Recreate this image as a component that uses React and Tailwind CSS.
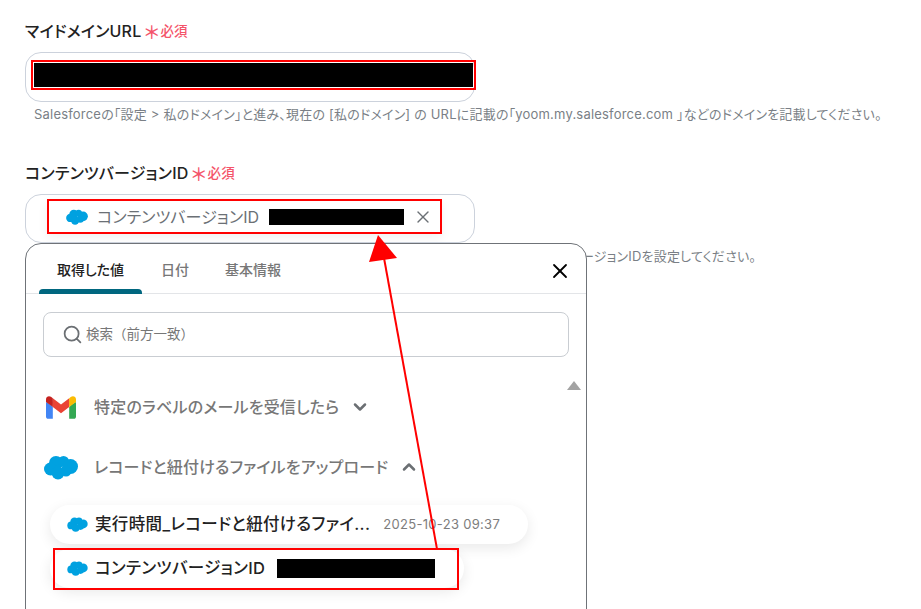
import { Search, X, ChevronDown, ChevronUp } from 'lucide-react';

const font = { fontFamily: 'Inter, "Noto Sans CJK JP", sans-serif' };

function Cloud({ className }) {
  return (
    <svg viewBox="0 0 34 25" className={className}>
      <g fill="#00a1e0">
        <circle cx="12" cy="8" r="7" />
        <circle cx="19.5" cy="6.5" r="5.5" />
        <circle cx="26.5" cy="11.5" r="7.5" />
        <circle cx="6.5" cy="14" r="6.5" />
        <circle cx="14" cy="18" r="6.5" />
        <circle cx="22" cy="16" r="5.5" />
      </g>
    </svg>
  );
}

function Gmail({ className }) {
  return (
    <svg viewBox="0 0 256 193" className={className}>
      <path fill="#4285F4" d="M58.182 192.05V93.14L27.507 65.077 0 49.504v125.091c0 9.658 7.825 17.455 17.455 17.455h40.727Z" />
      <path fill="#34A853" d="M197.818 192.05h40.727c9.659 0 17.455-7.826 17.455-17.455V49.505l-31.156 17.837-27.026 25.798v98.91Z" />
      <path fill="#EA4335" d="m58.182 93.14-4.174-38.647 4.174-36.989L128 69.868l69.818-52.364 4.669 34.992-4.669 40.644L128 145.504z" />
      <path fill="#FBBC04" d="M197.818 17.504V93.14L256 49.504V26.231c0-21.585-24.64-33.89-41.89-20.945l-16.292 12.218Z" />
      <path fill="#C5221F" d="M0 49.504l26.759 20.07L58.182 93.14V17.504L41.89 5.286C24.61-7.66 0 4.646 0 26.23v23.273Z" />
    </svg>
  );
}

function Label({ children }) {
  return (
    <div className="flex items-center h-[20px] text-[16px] tracking-[0.2px] font-medium text-[#222]">
      <span>{children}</span>
      <span className="ml-[3px] text-[18px] leading-none text-[#f4546a] translate-y-[2px]">＊</span>
      <span className="ml-[1px] text-[13.5px] font-medium text-[#f4546a]">必須</span>
    </div>
  );
}

export default function App() {
  return (
    <div style={font} className="relative w-[921px] h-[609px] overflow-hidden bg-white [font-feature-settings:'palt']">
      <div className="px-[25px] pt-[21px]">
        <Label>マイドメインURL</Label>
        <div className="mt-[11px] w-[450px] h-[50px] rounded-[16px] border border-[#ccd2dc] bg-white" />
        <p className="mt-[3px] ml-[9px] h-[18px] text-[13px] leading-[18px] tracking-[0.2px] text-[#7a7f86] whitespace-nowrap">
          Salesforceの「設定 &gt; 私のドメイン」と進み、現在の [私のドメイン] の URLに記載の「yoom.my.salesforce.com 」などのドメインを記載してください。
        </p>

        <div className="mt-[40px]">
          <Label>コンテンツバージョンID</Label>
        </div>
        <div className="mt-[11px] w-[450px] h-[49px] rounded-[16px] border border-[#ccd2dc] bg-white" />
        <p className="absolute left-[581px] top-[247px] text-[13px] leading-[18px] tracking-[0.2px] text-[#7a7f86] whitespace-nowrap">
          ージョンIDを設定してください。
        </p>
      </div>

      {/* red frame on the first field */}
      <div className="absolute left-[31px] top-[60px] w-[445px] h-[30px] border-2 border-[#f00] p-[1px]">
        <div className="w-full h-full bg-black" />
      </div>

      {/* selected value chip */}
      <div className="absolute left-[47px] top-[199px] w-[395px] h-[35px] border-2 border-[#f00] flex items-center pl-[17px] pt-[1px] text-[16px] tracking-[0.1px] text-[#6b7075] bg-white shadow-[0_4px_10px_rgba(0,0,0,0.06)]">
        <Cloud className="w-[22px] h-[16px]" />
        <span className="ml-[9px] whitespace-nowrap">コンテンツバージョンID</span>
        <span className="ml-[10px] w-[135px] h-[16px] bg-black" />
        <X className="ml-[9px] w-[20px] h-[20px] text-[#6b7075]" strokeWidth={1.6} />
      </div>

      {/* popup */}
      <div className="absolute left-[25px] top-[243px] w-[562px] h-[400px] rounded-[16px] border border-[#6f7378] bg-white">
        <div className="relative flex h-[50px] border-b border-[#e3e5e8] text-[14px] font-medium">
          <div className="ml-[13px] w-[103px] flex items-center justify-center pt-[1px] text-[#222] relative">
            取得した値
            <span className="absolute left-0 right-0 bottom-[-1px] h-[5px] rounded-t-[4px] bg-[#00677f]" />
          </div>
          <div className="ml-[19px] flex items-center pt-[1px] text-[#777]">日付</div>
          <div className="ml-[36px] flex items-center pt-[1px] text-[#777]">基本情報</div>
          <X className="absolute right-[14px] top-[15px] w-[24px] h-[24px] text-black" strokeWidth={1.8} />
        </div>

        <div className="mx-[17px] mt-[18px] h-[45px] rounded-[8px] border border-[#c9cdd2] flex items-center pl-[18px] pb-[1px] text-[13.5px] text-[#777] [font-feature-settings:normal]">
          <Search className="w-[21px] h-[21px] text-[#6b6f73]" strokeWidth={2} />
          <span className="ml-[3px]">検索（前方一致）</span>
        </div>

        <div className="absolute right-[5px] top-[137px] w-0 h-0 border-x-[7px] border-x-transparent border-b-[9px] border-b-[#a3a3a3]" />

        <div className="ml-[20px] mt-[38px] flex items-center h-[24px] text-[16px] tracking-[0.2px] font-medium text-[#777]">
          <Gmail className="w-[30px] h-[23px]" />
          <span className="ml-[18px]">特定のラベルのメールを受信したら</span>
          <ChevronDown className="ml-[11px] w-[20px] h-[20px] text-[#6b6f73]" strokeWidth={3} />
        </div>

        <div className="ml-[18px] mt-[35px] flex items-center h-[26px] text-[16px] tracking-[0.2px] font-medium text-[#777]">
          <Cloud className="w-[34px] h-[25px]" />
          <span className="ml-[16px]">レコードと紐付けるファイルをアップロード</span>
          <ChevronUp className="ml-[11px] w-[20px] h-[20px] text-[#6b6f73]" strokeWidth={3} />
        </div>

        <div className="ml-[24px] mt-[25px] w-[478px] h-[39px] rounded-full bg-white shadow-[0_4px_14px_rgba(0,0,0,0.09)] flex items-center pl-[17px] text-[16.5px] tracking-[0.35px] font-medium text-[#222]">
          <Cloud className="w-[21px] h-[15px] shrink-0" />
          <span className="ml-[7px] whitespace-nowrap">実行時間_レコードと紐付けるファイ...</span>
          <span className="ml-[13px] text-[13px] font-normal text-[#7d7d7d] tracking-[0.3px] whitespace-nowrap">2025-10-23 09:37</span>
        </div>

        <div className="ml-[24px] mt-[5px] w-[414px] h-[39px] rounded-full bg-white shadow-[0_4px_14px_rgba(0,0,0,0.09)] flex items-center pl-[17px] text-[16.5px] tracking-[0.35px] font-medium text-[#222]">
          <Cloud className="w-[21px] h-[15px] shrink-0" />
          <span className="ml-[7px] whitespace-nowrap">コンテンツバージョンID</span>
          <span className="ml-[12px] w-[158px] h-[19px] bg-black" />
        </div>
      </div>

      {/* red annotations */}
      <div className="absolute left-[53px] top-[548px] w-[406px] h-[42px] border-2 border-[#f00]" />
      <svg className="absolute left-0 top-0 w-[921px] h-[609px] pointer-events-none" viewBox="0 0 921 609">
        <line x1="437" y1="549" x2="384" y2="258" stroke="#f00" strokeWidth="2" />
        <polygon points="378,235 369,262 397,258" fill="#f00" />
      </svg>
    </div>
  );
}
